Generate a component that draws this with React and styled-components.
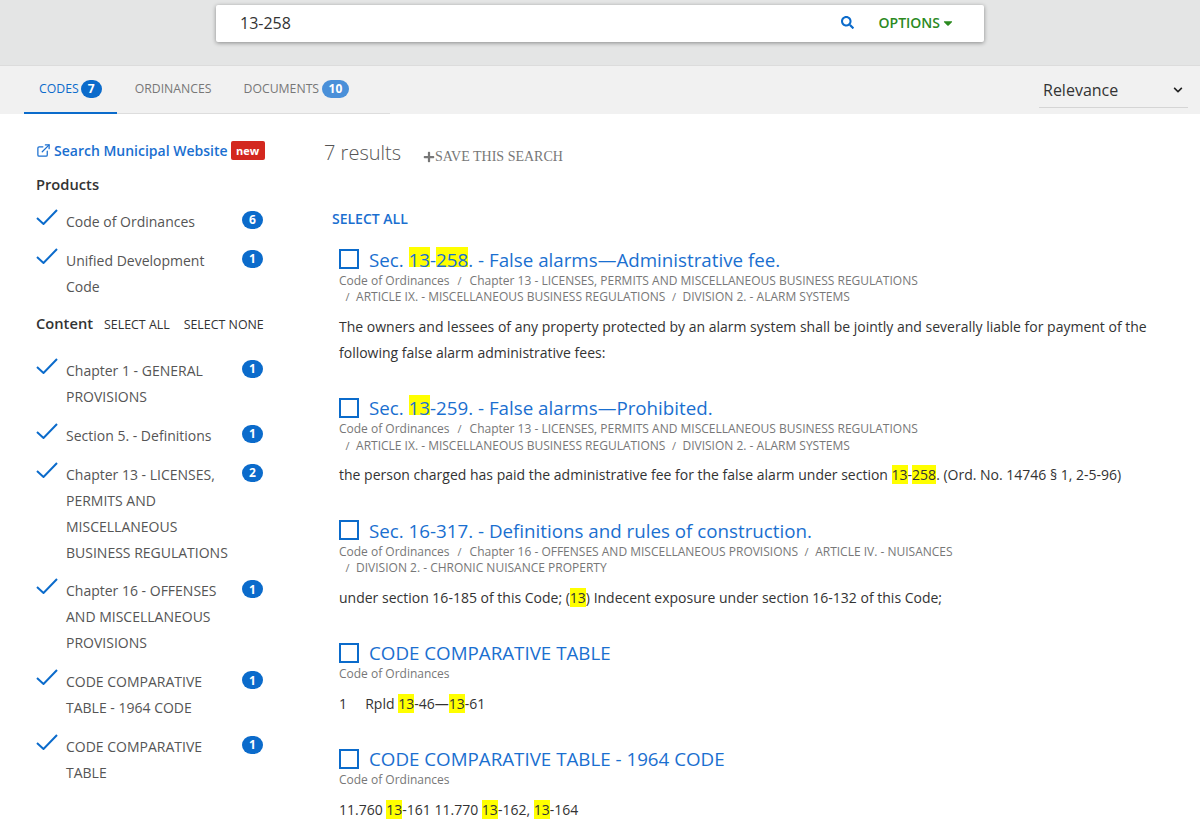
import React from 'react';
import styled, { createGlobalStyle } from 'styled-components';
import { FaSearch, FaPlus, FaCaretDown, FaChevronDown } from 'react-icons/fa';
import { FiExternalLink } from 'react-icons/fi';

const GlobalStyle = createGlobalStyle`
  html, body {
    margin: 0;
    padding: 0;
    background: #fff;
    font-family: "Open Sans", "Liberation Sans", sans-serif;
    color: #333;
  }
  * { box-sizing: border-box; }
`;

const PRODUCTS = [
  { label: 'Code of Ordinances', count: 6 },
  { label: 'Unified Development Code', count: 1 },
];

const CONTENT = [
  { label: 'Chapter 1 - GENERAL PROVISIONS', count: 1 },
  { label: 'Section 5. - Definitions', count: 1 },
  { label: 'Chapter 13 - LICENSES, PERMITS AND MISCELLANEOUS BUSINESS REGULATIONS', count: 2 },
  { label: 'Chapter 16 - OFFENSES AND MISCELLANEOUS PROVISIONS', count: 1 },
  { label: 'CODE COMPARATIVE TABLE - 1964 CODE', count: 1 },
  { label: 'CODE COMPARATIVE TABLE', count: 1 },
];

const Check = () => (
  <CheckSvg viewBox="0 0 22 16">
    <path d="M1 9l6.5 6L21 1" fill="none" stroke="#0b6bcb" strokeWidth="2" />
  </CheckSvg>
);

const FacetItem = ({ label, count }) => (
  <FacetRow>
    <Check />
    <FacetLabel>{label}</FacetLabel>
    <Count>{count}</Count>
  </FacetRow>
);

const App = () => (
  <Page>
    <GlobalStyle />
    <SearchBand>
      <SearchBox>
        <SearchText>13-258</SearchText>
        <SearchIcon><FaSearch /></SearchIcon>
        <Options>OPTIONS<FaCaretDown /></Options>
      </SearchBox>
    </SearchBand>

    <TabBar>
      <Tabs>
        <Tab $active>CODES<TabCount>7</TabCount></Tab>
        <Tab>ORDINANCES</Tab>
        <Tab>DOCUMENTS<TabCount $light>10</TabCount></Tab>
      </Tabs>
      <SortSelect>Relevance<FaChevronDown /></SortSelect>
    </TabBar>

    <Body>
      <Sidebar>
        <MuniRow>
          <MuniLink><FiExternalLink />Search Municipal Website</MuniLink>
          <NewTag>new</NewTag>
        </MuniRow>
        <FacetTitle>Products</FacetTitle>
        <FacetList>
          {PRODUCTS.map(p => <FacetItem key={p.label} {...p} />)}
        </FacetList>
        <ContentHead>
          <FacetTitle>Content</FacetTitle>
          <SmallLink>SELECT ALL</SmallLink>
          <SmallLink>SELECT NONE</SmallLink>
        </ContentHead>
        <FacetList>
          {CONTENT.map(c => <FacetItem key={c.label} {...c} />)}
        </FacetList>
      </Sidebar>

      <Main>
        <ResultsHead>
          <ResultCount>7 results</ResultCount>
          <SaveSearch><FaPlus />SAVE THIS SEARCH</SaveSearch>
        </ResultsHead>
        <SelectAll>SELECT ALL</SelectAll>

        <Result>
          <TitleRow>
            <Box />
            <Title>Sec. <TitleHit>13</TitleHit>-<TitleHit>258</TitleHit>. - False alarms—Administrative fee.</Title>
          </TitleRow>
          <Crumbs>
            Code of Ordinances<Slash $first>/</Slash>Chapter 13 - LICENSES, PERMITS AND MISCELLANEOUS BUSINESS REGULATIONS<br />
            <Slash>/</Slash>ARTICLE IX. - MISCELLANEOUS BUSINESS REGULATIONS<Slash>/</Slash>DIVISION 2. - ALARM SYSTEMS
          </Crumbs>
          <Snippet>
            The owners and lessees of any property protected by an alarm system shall be jointly and severally liable for payment of the following false alarm administrative fees:
          </Snippet>
        </Result>

        <Result>
          <TitleRow>
            <Box />
            <Title>Sec. <TitleHit>13</TitleHit>-259. - False alarms—Prohibited.</Title>
          </TitleRow>
          <Crumbs>
            Code of Ordinances<Slash $first>/</Slash>Chapter 13 - LICENSES, PERMITS AND MISCELLANEOUS BUSINESS REGULATIONS<br />
            <Slash>/</Slash>ARTICLE IX. - MISCELLANEOUS BUSINESS REGULATIONS<Slash>/</Slash>DIVISION 2. - ALARM SYSTEMS
          </Crumbs>
          <Snippet>
            the person charged has paid the administrative fee for the false alarm under section <Hit>13</Hit>-<Hit>258</Hit>. (Ord. No. 14746 § 1, 2-5-96)
          </Snippet>
        </Result>

        <Result>
          <TitleRow>
            <Box />
            <Title>Sec. 16-317. - Definitions and rules of construction.</Title>
          </TitleRow>
          <Crumbs>
            Code of Ordinances<Slash $first>/</Slash>Chapter 16 - OFFENSES AND MISCELLANEOUS PROVISIONS<Slash>/</Slash>ARTICLE IV. - NUISANCES<br />
            <Slash>/</Slash>DIVISION 2. - CHRONIC NUISANCE PROPERTY
          </Crumbs>
          <Snippet>
            under section 16-185 of this Code; (<Hit>13</Hit>) Indecent exposure under section 16-132 of this Code;
          </Snippet>
        </Result>

        <Result>
          <TitleRow>
            <Box />
            <Title>CODE COMPARATIVE TABLE</Title>
          </TitleRow>
          <Crumbs>Code of Ordinances</Crumbs>
          <Snippet>1 &nbsp;&nbsp;&nbsp; Rpld <Hit>13</Hit>-46—<Hit>13</Hit>-61</Snippet>
        </Result>

        <Result>
          <TitleRow>
            <Box />
            <Title>CODE COMPARATIVE TABLE - 1964 CODE</Title>
          </TitleRow>
          <Crumbs>Code of Ordinances</Crumbs>
          <Snippet>11.760 <Hit>13</Hit>-161 11.770 <Hit>13</Hit>-162, <Hit>13</Hit>-164</Snippet>
        </Result>
      </Main>
    </Body>
  </Page>
);

export default App;

const Page = styled.div`
  width: 1200px;
  height: 839px;
  overflow: hidden;
`;

const SearchBand = styled.div`
  height: 66px;
  background: #e4e5e5;
  border-bottom: 1px solid #dcdcdc;
  padding-top: 5px;
  display: flex;
  justify-content: center;
`;

const SearchBox = styled.div`
  width: 768px;
  height: 37px;
  background: #fff;
  border-radius: 2px;
  box-shadow: 0 1px 4px rgba(0, 0, 0, 0.4);
  display: flex;
  align-items: center;
  padding: 0 29px 2px 24px;
`;

const SearchText = styled.div`
  flex: 1;
  font-size: 16px;
  color: #333;
`;

const SearchIcon = styled.span`
  color: #0b6bcb;
  font-size: 13px;
  display: flex;
  margin-right: 25px;
`;

const Options = styled.span`
  color: #2b8a1f;
  font-size: 14px;
  font-weight: 600;
  display: flex;
  align-items: center;
  gap: 1px;
  svg { font-size: 14px; }
`;

const TabBar = styled.div`
  height: 48px;
  background: #f1f1f1;
  display: flex;
  justify-content: space-between;
  padding: 0 12px 0 24px;
`;

const Tabs = styled.div`
  width: 366px;
  display: flex;
  border-bottom: 1px solid #ddd;
`;

const Tab = styled.div`
  height: 48px;
  display: flex;
  align-items: center;
  font-size: 12.25px;
  gap: ${p => (p.$active ? '2px' : '3px')};
  padding: 0 ${p => (p.$active ? '15px' : '16px')} 1px;
  margin-right: ${p => (p.$active ? '2px' : '0')};
  color: ${p => (p.$active ? '#0b6bcb' : '#777')};
  border-bottom: 2px solid ${p => (p.$active ? '#0b6bcb' : 'transparent')};
`;

const TabCount = styled.span`
  min-width: 21px;
  height: 18px;
  padding: 0 6.5px;
  border-radius: 9px;
  background: ${p => (p.$light ? '#4a90d9' : '#0b6bcb')};
  color: #fff;
  font-size: 12px;
  font-weight: 700;
  display: flex;
  align-items: center;
  justify-content: center;
`;

const SortSelect = styled.div`
  width: 149px;
  height: 42px;
  border-bottom: 1px solid #d5d5d5;
  padding: 6px 5px 0 4px;
  display: flex;
  align-items: center;
  justify-content: space-between;
  font-size: 16px;
  color: #333;
  svg { font-size: 10px; color: #222; }
`;

const Body = styled.div`
  display: flex;
  padding-left: 36px;
`;

const Sidebar = styled.aside`
  width: 227px;
  flex-shrink: 0;
  padding-top: 26px;
`;

const MuniRow = styled.div`
  display: flex;
  align-items: center;
  height: 20px;
  white-space: nowrap;
`;

const MuniLink = styled.a`
  color: #1a6fd0;
  font-size: 14px;
  font-weight: 600;
  display: flex;
  align-items: center;
  gap: 3px;
  svg { font-size: 15px; }
`;

const NewTag = styled.span`
  margin-left: 3px;
  background: #d3281f;
  color: #fff;
  font-size: 11px;
  font-weight: 700;
  height: 19px;
  width: 34px;
  flex-shrink: 0;
  border-radius: 2px;
  display: flex;
  align-items: center;
  justify-content: center;
`;

const FacetTitle = styled.div`
  font-size: 14.7px;
  font-weight: 600;
  color: #333;
  margin-top: 13.5px;
`;

const FacetList = styled.div`
  margin-top: 15.3px;
  display: flex;
  flex-direction: column;
`;

const FacetRow = styled.div`
  display: grid;
  grid-template-columns: 30px 170px 21px;
  padding-bottom: 12.8px;
  align-items: start;
`;

const CheckSvg = styled.svg`
  width: 22px;
  height: 16px;
`;

const FacetLabel = styled.div`
  font-size: 14px;
  line-height: 26px;
  color: #555;
`;

const Count = styled.span`
  height: 18px;
  width: 21px;
  margin: 2px 0 0 6px;
  border-radius: 9px;
  background: #0b6bcb;
  color: #fff;
  font-size: 12px;
  font-weight: 700;
  display: flex;
  align-items: center;
  justify-content: center;
`;

const ContentHead = styled.div`
  display: flex;
  align-items: baseline;
  white-space: nowrap;
  margin-top: 1.1px;
  ${FacetTitle} { margin-top: 0; margin-right: 11px; }
  & + ${FacetList} { margin-top: 24.5px; }
`;

const SmallLink = styled.span`
  font-size: 12.4px;
  color: #333;
  margin-right: 14px;
`;

const Main = styled.main`
  flex: 1;
  padding-left: 61px;
  padding-top: 26px;
`;

const ResultsHead = styled.div`
  display: flex;
  align-items: center;
  height: 28px;
`;

const ResultCount = styled.div`
  font-size: 20px;
  font-weight: 300;
  color: #555;
  margin-bottom: 4px;
`;

const SaveSearch = styled.a`
  margin: 6px 0 0 22px;
  font-family: "Liberation Serif", serif;
  font-size: 14px;
  color: #777;
  display: flex;
  align-items: center;
  svg { font-size: 12px; }
`;

const SelectAll = styled.div`
  margin: 41px 0 16px 8px;
  font-size: 14px;
  line-height: 20px;
  font-weight: 600;
  color: #1a6fd0;
`;

const Result = styled.article`
  margin: 0 15px 28px 15px;
`;

const TitleRow = styled.div`
  display: flex;
  align-items: center;
  gap: 10px;
  height: 28px;
`;

const Box = styled.span`
  width: 20px;
  height: 20px;
  border: 2px solid #0b6bcb;
`;

const Title = styled.a`
  font-size: 18.75px;
  color: #1a6fd0;
`;

const Hit = styled.span`
  background: #ff0;
`;

// the yellow stops at the baseline in titles
const TitleHit = styled.span`
  background: linear-gradient(#ff0, #ff0) no-repeat top / 100% 20px;
`;

const Crumbs = styled.div`
  font-size: 12px;
  line-height: 16.5px;
  color: #777;
  margin-top: -0.5px;
`;

const Slash = styled.span`
  margin: 0 ${p => (p.$first ? '8px' : '6.5px')};
  font-size: 11px;
`;

const Snippet = styled.p`
  margin: 8px 0 0;
  font-size: 14px;
  line-height: 26px;
  color: #333;
`;
